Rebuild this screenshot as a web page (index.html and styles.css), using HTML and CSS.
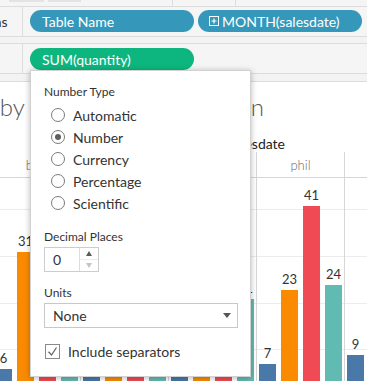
FILE: index.html
```html
<!DOCTYPE html>
<html lang="en">
<head>
    <meta charset="UTF-8">
    <meta name="viewport" content="width=device-width, initial-scale=1.0">
    <title>Number Format</title>
    <link rel="stylesheet" href="styles.css">
</head>
<body>
    <!-- Faixa superior (abas) -->
    <div class="top-strip">
        <div class="tab"></div>
        <div class="tab tab-second"></div>
        <div class="strip-cell"></div>
    </div>

    <!-- Prateleiras -->
    <div class="shelf">
        <div class="shelf-label"><span>Columns</span></div>
        <div class="shelf-pills">
            <div class="pill pill-dim">Table Name</div>
            <div class="pill pill-dim">
                <svg class="pill-icon" width="10" height="10" viewBox="0 0 10 10">
                    <rect x="0.5" y="0.5" width="9" height="9" fill="none" stroke="#fff" stroke-width="1"/>
                    <path d="M5 2.5v5M2.5 5h5" stroke="#fff" stroke-width="1.2"/>
                </svg>MONTH(salesdate)
            </div>
        </div>
    </div>
    <div class="shelf-gap"></div>
    <div class="shelf shelf-rows">
        <div class="shelf-label"><span>Rows</span></div>
        <div class="shelf-pills">
            <div class="pill pill-measure">SUM(quantity)</div>
        </div>
    </div>
    <div class="view-gap"></div>

    <!-- Vista do gráfico -->
    <div class="view">
        <div class="title"><span>by Week and Salesperson</span></div>
        <div class="field-label">Table Name / Month of salesdate</div>

        <div class="pane-headers">
            <div class="pane-header">bob</div>
            <div class="pane-header">jane</div>
            <div class="pane-header">mark</div>
            <div class="pane-header">phil</div>
            <div class="pane-header">tom</div>
        </div>

        <div class="plot">
            <div class="pane">
                <div class="bar-col"><span class="bar-label">6</span><div class="bar blue" style="height: 28px"></div></div>
                <div class="bar-col"><span class="bar-label">31</span><div class="bar orange" style="height: 145px"></div></div>
                <div class="bar-col"><span class="bar-label">18</span><div class="bar red" style="height: 84px"></div></div>
                <div class="bar-col"><span class="bar-label">14</span><div class="bar teal" style="height: 65px"></div></div>
            </div>
            <div class="pane">
                <div class="bar-col"><span class="bar-label">12</span><div class="bar blue" style="height: 56px"></div></div>
                <div class="bar-col"><span class="bar-label">20</span><div class="bar orange" style="height: 93px"></div></div>
                <div class="bar-col"><span class="bar-label">26</span><div class="bar red" style="height: 121px"></div></div>
                <div class="bar-col"><span class="bar-label">15</span><div class="bar teal" style="height: 70px"></div></div>
            </div>
            <div class="pane">
                <div class="bar-col"><span class="bar-label">10</span><div class="bar blue" style="height: 47px"></div></div>
                <div class="bar-col"><span class="bar-label">19</span><div class="bar orange" style="height: 89px"></div></div>
                <div class="bar-col"><span class="bar-label">30</span><div class="bar red" style="height: 140px"></div></div>
                <div class="bar-col"><span class="bar-label">21</span><div class="bar teal" style="height: 98px"></div></div>
            </div>
            <div class="pane">
                <div class="bar-col"><span class="bar-label">7</span><div class="bar blue" style="height: 33px"></div></div>
                <div class="bar-col"><span class="bar-label">23</span><div class="bar orange" style="height: 107px"></div></div>
                <div class="bar-col"><span class="bar-label">41</span><div class="bar red" style="height: 191px"></div></div>
                <div class="bar-col"><span class="bar-label">24</span><div class="bar teal" style="height: 112px"></div></div>
            </div>
            <div class="pane">
                <div class="bar-col"><span class="bar-label">9</span><div class="bar blue" style="height: 42px"></div></div>
                <div class="bar-col"><span class="bar-label">15</span><div class="bar orange" style="height: 70px"></div></div>
                <div class="bar-col"><span class="bar-label">20</span><div class="bar red" style="height: 93px"></div></div>
                <div class="bar-col"><span class="bar-label">12</span><div class="bar teal" style="height: 56px"></div></div>
            </div>
        </div>
    </div>

    <!-- Caixa de formato de número -->
    <div class="format-popup">
        <div class="section-label">Number Type</div>
        <div class="radio-list">
            <div class="radio-row"><span class="radio"></span>Automatic</div>
            <div class="radio-row"><span class="radio checked"></span>Number</div>
            <div class="radio-row"><span class="radio"></span>Currency</div>
            <div class="radio-row"><span class="radio"></span>Percentage</div>
            <div class="radio-row"><span class="radio"></span>Scientific</div>
        </div>

        <div class="section-label decimal-label">Decimal Places</div>
        <div class="spinner">
            <div class="spinner-value">0</div>
            <div class="spinner-arrows">
                <div class="arrow-cell"><span class="arrow-up"></span></div>
                <div class="arrow-cell"><span class="arrow-down"></span></div>
            </div>
        </div>

        <div class="section-label units-label">Units</div>
        <div class="select">
            <span>None</span>
            <span class="select-caret"></span>
        </div>

        <div class="check-row">
            <span class="checkbox">
                <svg width="13" height="13" viewBox="0 0 13 13">
                    <path d="M2.5 6.8l3 3.2 5-7.5" fill="none" stroke="#666" stroke-width="1.3"/>
                </svg>
            </span>
            Include separators
        </div>
    </div>
</body>
</html>
```

FILE: styles.css
```css
html, body {
    margin: 0;
    padding: 0;
    width: 100%;
    height: 100%;
    overflow: hidden;
}

body {
    position: relative;
    font-family: Lato, "Open Sans", sans-serif;
    color: #333;
    background: #fff;
}

/* Faixa superior */
.top-strip {
    display: flex;
    height: 6px;
    background: #f5f5f5;
    border-bottom: 1px solid #dcdcdc;
}

.tab {
    width: 35px;
    height: 2px;
    margin-left: 9px;
    background: #e3e3e3;
}

.tab-second {
    width: 33px;
    margin-left: 4px;
}

.strip-cell {
    width: 62px;
    margin-left: 91px;
    border-left: 1px solid #dcdcdc;
    border-right: 1px solid #dcdcdc;
}

/* Prateleiras (Columns / Rows) */
.shelf {
    display: flex;
    height: 29px;
    background: #f5f5f5;
    border-bottom: 1px solid #dcdcdc;
}

.shelf-label {
    width: 22px;
    flex: none;
    border-right: 1px solid #dcdcdc;
    overflow: hidden;
    white-space: nowrap;
    font-size: 14px;
    line-height: 29px;
    color: #333;
}

.shelf-label span {
    display: block;
    margin-left: -46px;
}

.shelf-pills {
    display: flex;
    gap: 4px;
    padding: 3px 0 0 7px;
}

.shelf-rows .shelf-pills {
    padding-top: 4px;
}

.shelf-gap {
    height: 6px;
    background: #f3f3f3;
    border-bottom: 1px solid #dcdcdc;
}

.view-gap {
    height: 7px;
    background: #f3f3f3;
    border-bottom: 1px solid #dcdcdc;
}

.pill {
    display: flex;
    align-items: center;
    width: 164px;
    height: 22px;
    box-sizing: border-box;
    padding-left: 12px;
    border-radius: 11px;
    font-size: 14px;
    color: #fff;
    white-space: nowrap;
}

.pill-dim {
    background: #3598ba;
}

.pill-measure {
    background: #0db67e;
}

.pill-icon {
    margin-right: 3px;
}

.pill-dim:nth-child(2) {
    padding-left: 11px;
}

/* Vista */
.view {
    overflow: hidden;
}

/* titulo ancorado no fim, o começo passa da borda esquerda */
.title {
    display: flex;
    justify-content: flex-end;
    width: 264px;
    padding-top: 11px;
    font-size: 24px;
    line-height: 28px;
    font-weight: 300;
    color: #555;
    white-space: nowrap;
}

.field-label {
    width: 285px;
    margin-top: 15px;
    text-align: right;
    font-size: 14px;
    line-height: 16px;
    color: #222;
    white-space: nowrap;
}

.pane-headers, .plot {
    display: flex;
    margin-left: -8px;
}

.pane-header {
    flex: none;
    width: 88px;
    height: 26px;
    box-sizing: border-box;
    padding-top: 2px;
    border-left: 1px solid #d6d6d6;
    border-bottom: 1px solid #d6d6d6;
    text-align: center;
    font-size: 13px;
    line-height: 23px;
    font-weight: 300;
    color: #666;
}

.plot {
    height: 219px;
    background: repeating-linear-gradient(to top, #ececec 0, #ececec 1px, transparent 1px, transparent 46.7px);
}

.pane {
    flex: none;
    display: flex;
    align-items: flex-end;
    gap: 5px;
    width: 88px;
    box-sizing: border-box;
    padding-left: 2px;
    border-left: 1px solid #d6d6d6;
}

.bar-col {
    display: flex;
    flex-direction: column;
    align-items: center;
    width: 17px;
}

.bar-label {
    margin-bottom: 4px;
    font-size: 13px;
    line-height: 13px;
    color: #333;
}

.bar {
    width: 17px;
}

.blue { background: #4a78a9; }
.orange { background: #fa8b00; }
.red { background: #f04a55; }
.teal { background: #62bbb3; }

/* Caixa de formato */
.format-popup {
    position: absolute;
    z-index: 10;
    left: 30px;
    top: 70px;
    width: 221px;
    height: 307px;
    box-sizing: border-box;
    padding: 14px 13px 0 13px;
    background: #fff;
    border: 1px solid #d2d2d2;
    box-shadow: 0 1px 6px rgba(0, 0, 0, 0.28);
}

.section-label {
    font-size: 12px;
    line-height: 14px;
    color: #333;
}

.radio-list {
    margin-top: 5px;
}

.radio-row {
    display: flex;
    align-items: center;
    height: 22px;
    font-size: 14px;
    color: #333;
}

.radio {
    display: flex;
    align-items: center;
    justify-content: center;
    width: 14px;
    height: 14px;
    box-sizing: border-box;
    margin: 0 8px 0 7px;
    border: 1px solid #7a7a7a;
    border-radius: 50%;
}

.radio.checked::after {
    content: "";
    width: 6px;
    height: 6px;
    border-radius: 50%;
    background: #5f5f5f;
}

.decimal-label {
    margin-top: 16px;
}

.spinner {
    display: flex;
    width: 55px;
    height: 25px;
    box-sizing: border-box;
    margin-top: 3px;
    border: 1px solid #cdcdcd;
}

.spinner-value {
    width: 35px;
    padding-left: 8px;
    box-sizing: border-box;
    border-right: 1px solid #dcdcdc;
    font-size: 14px;
    line-height: 23px;
}

.spinner-arrows {
    flex: 1;
    display: flex;
    flex-direction: column;
}

.arrow-cell {
    flex: 1;
    display: flex;
    align-items: center;
    justify-content: center;
}

.arrow-cell:first-child {
    border-bottom: 1px solid #ececec;
}

.arrow-up {
    border-left: 3.5px solid transparent;
    border-right: 3.5px solid transparent;
    border-bottom: 5px solid #5a5a5a;
}

.arrow-down {
    border-left: 3.5px solid transparent;
    border-right: 3.5px solid transparent;
    border-top: 5px solid #c4c4c4;
}

.units-label {
    margin-top: 14px;
}

.select {
    display: flex;
    align-items: center;
    justify-content: space-between;
    width: 194px;
    height: 25px;
    box-sizing: border-box;
    margin-top: 3px;
    padding: 0 6px 0 8px;
    border: 1px solid #c8c8c8;
    font-size: 14px;
}

.select-caret {
    border-left: 4px solid transparent;
    border-right: 4px solid transparent;
    border-top: 5px solid #555;
}

.check-row {
    display: flex;
    align-items: center;
    height: 22px;
    margin-top: 12px;
    font-size: 14px;
    color: #333;
}

.checkbox {
    display: flex;
    align-items: center;
    justify-content: center;
    width: 15px;
    height: 15px;
    box-sizing: border-box;
    margin: 0 8px 0 1px;
    border: 1px solid #8a8a8a;
}
```
